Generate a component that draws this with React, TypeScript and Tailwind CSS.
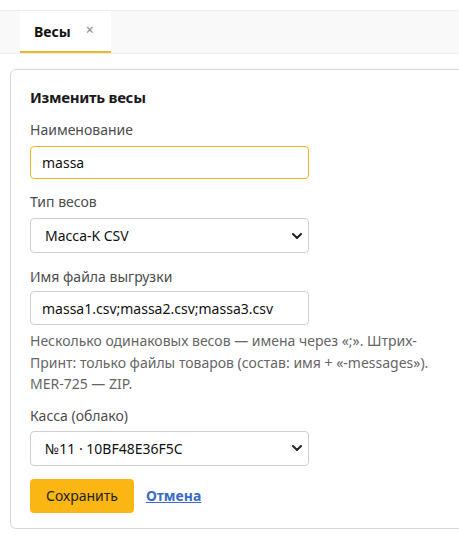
import { useState } from "react"

const font = { fontFamily: '"Noto Sans", "Open Sans", Arial, sans-serif' }

function Chevron() {
  return (
    <svg
      viewBox="0 0 10 6"
      className="pointer-events-none absolute right-[7px] top-1/2 h-[6px] w-[10px] -translate-y-1/2"
    >
      <path d="M1 1l4 4 4-4" fill="none" stroke="#222" strokeWidth="2" strokeLinecap="round" strokeLinejoin="round" />
    </svg>
  )
}

export default function App() {
  const [name, setName] = useState("massa")
  const [kind, setKind] = useState("massa-csv")
  const [files, setFiles] = useState("massa1.csv;massa2.csv;massa3.csv")
  const [cash, setCash] = useState("11")

  return (
    <div className="min-h-[550px] overflow-hidden bg-white text-[14px] text-[#222]" style={font}>
      {/* Вкладки */}
      <div className="mt-[10px] flex h-[44px] border-y border-[#efefef] bg-[#f9f9f9] pl-[20px]">
        <div className="flex items-center gap-[15px] border-b-2 border-[#f0b429] bg-white pl-[14px] pr-[17px]">
          <span className="font-bold text-[#111]">Весы</span>
          <span className="-mt-[3px] text-[14px] leading-none text-[#888]">×</span>
        </div>
      </div>

      {/* Форма */}
      <div className="ml-[10px] mt-[15px] w-[460px] rounded-[6px] border border-[#d6d6db] px-[19px] pb-[15px] pt-[16px]">
        <h2 className="text-[15px] font-bold leading-[22px] tracking-[-0.3px] text-[#1a1a1a]">Изменить весы</h2>

        <label className="mt-[12px] block leading-[20px] text-[#4d4d4d]">Наименование</label>
        <input
          value={name}
          onChange={(e) => setName(e.target.value)}
          className="mt-[6px] block h-[33px] w-[279px] rounded-[4px] border border-[#f0b429] px-[11px] text-[14px] text-[#111] outline-none"
        />

        <label className="mt-[13px] block leading-[20px] text-[#4d4d4d]">Тип весов</label>
        <div className="relative mt-[6px] w-[279px]">
          <select
            value={kind}
            onChange={(e) => setKind(e.target.value)}
            className="block h-[35px] w-full appearance-none rounded-[4px] border border-[#cfcfcf] bg-white pl-[14px] pr-[24px] text-[14px] text-[#111] outline-none"
          >
            <option value="massa-csv">Масса-K CSV</option>
            <option value="shtrih">Штрих-Принт</option>
            <option value="mer">MER-725</option>
          </select>
          <Chevron />
        </div>

        <label className="mt-[14px] block leading-[20px] text-[#4d4d4d]">Имя файла выгрузки</label>
        <input
          value={files}
          onChange={(e) => setFiles(e.target.value)}
          className="mt-[4px] block h-[34px] w-[279px] rounded-[4px] border border-[#cfcfcf] px-[11px] text-[14px] text-[#111] outline-none"
        />
        <p className="mt-[5px] leading-[21.5px] text-[#666]">
          Несколько одинаковых весов — имена через «;». Штрих-Принт: только файлы товаров (состав: имя + «-messages»).
          MER-725 — ZIP.
        </p>

        <label className="mt-[11px] block leading-[20px] text-[#4d4d4d]">Касса (облако)</label>
        <div className="relative mt-[5px] w-[279px]">
          <select
            value={cash}
            onChange={(e) => setCash(e.target.value)}
            className="block h-[35px] w-full appearance-none rounded-[4px] border border-[#cfcfcf] bg-white pl-[14px] pr-[24px] text-[14px] text-[#111] outline-none"
          >
            <option value="11">№11 · 10BF48E36F5C</option>
          </select>
          <Chevron />
        </div>

        <div className="mt-[13px] flex items-center gap-[12px]">
          <button className="h-[34px] rounded-[4px] bg-[#fbb614] px-[16px] text-[14px] text-[#222]">Сохранить</button>
          <a href="#" className="text-[14px] font-bold text-[#3a6bc9] underline">
            Отмена
          </a>
        </div>
      </div>
    </div>
  )
}
